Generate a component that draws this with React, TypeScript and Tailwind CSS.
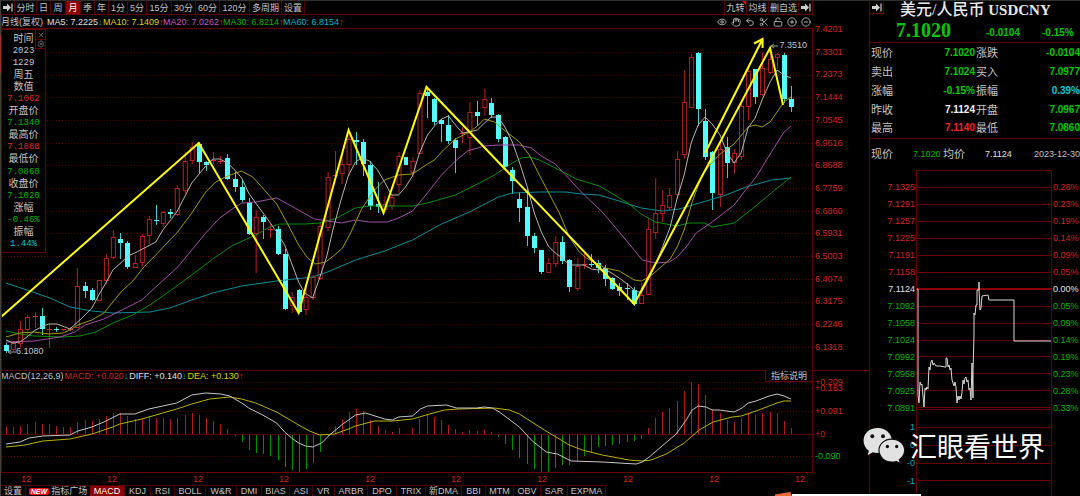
import React from "react";
import { Eye, Hand, Undo2, Scissors, LockOpen, CirclePlus, CircleMinus, X, Settings } from "lucide-react";

type Candle = [high: number, top: number, bottom: number, low: number, up: 0 | 1];

const candles: Candle[] = [
  [343, 345, 351, 352, 0], [341, 343, 349, 350, 1], [321, 329, 343, 346, 1], [315, 317, 329, 333, 1], [312, 316, 316, 327, 1],
  [308, 316, 329, 334, 0], [324, 329, 329, 347, 1], [327, 329, 329, 331, 0], [329, 329, 329, 330, 1], [327, 329, 329, 330, 1],
  [268, 286, 327, 327, 1], [282, 286, 291, 297, 0], [288, 290, 300, 300, 0], [280, 280, 300, 300, 1], [254, 258, 280, 283, 1],
  [230, 237, 257, 258, 1], [233, 239, 243, 258, 0], [241, 243, 267, 268, 0], [255, 263, 267, 267, 1], [234, 236, 262, 266, 1],
  [216, 219, 235, 243, 1], [205, 220, 221, 224, 0], [211, 212, 223, 226, 1], [209, 212, 214, 217, 0], [185, 188, 214, 215, 1],
  [152, 161, 190, 193, 1], [142, 147, 160, 163, 1], [142, 144, 162, 172, 0], [161, 162, 165, 170, 0], [152, 160, 160, 163, 1],
  [156, 161, 161, 163, 1], [154, 158, 179, 179, 0], [172, 179, 187, 191, 0], [180, 187, 200, 201, 0], [198, 202, 234, 234, 0],
  [210, 217, 233, 272, 1], [215, 217, 222, 238, 0], [224, 229, 229, 237, 1], [226, 229, 254, 254, 0], [249, 254, 309, 309, 0],
  [292, 297, 305, 312, 1], [289, 290, 312, 312, 0], [288, 297, 309, 314, 1], [275, 277, 297, 299, 1], [222, 226, 278, 279, 1],
  [172, 177, 227, 230, 1], [151, 175, 175, 177, 1], [154, 164, 173, 183, 1], [132, 139, 164, 175, 1], [132, 140, 142, 164, 0],
  [139, 142, 164, 175, 0], [161, 165, 206, 209, 0], [182, 204, 207, 212, 0], [196, 204, 209, 210, 1], [194, 197, 205, 209, 1],
  [152, 156, 184, 192, 1], [153, 157, 165, 172, 0], [157, 161, 172, 176, 1], [90, 93, 153, 153, 1], [87, 92, 96, 117, 0],
  [98, 99, 122, 124, 0], [119, 120, 124, 141, 0], [115, 125, 141, 143, 0], [138, 140, 148, 172, 0], [127, 133, 133, 142, 1],
  [102, 112, 137, 154, 1], [101, 112, 116, 125, 0], [89, 99, 107, 115, 1], [98, 103, 115, 117, 0], [114, 115, 139, 141, 0],
  [136, 137, 167, 168, 0], [167, 170, 181, 193, 0], [192, 199, 208, 221, 0], [189, 207, 236, 245, 0], [233, 236, 248, 252, 0],
  [250, 250, 272, 273, 0], [258, 263, 272, 272, 1], [236, 242, 263, 266, 1], [236, 242, 261, 263, 0], [259, 260, 287, 291, 0],
  [258, 266, 288, 290, 1], [253, 264, 264, 268, 1], [254, 264, 264, 266, 0], [260, 263, 268, 272, 0], [265, 268, 279, 285, 0],
  [277, 278, 289, 289, 0], [283, 287, 291, 295, 0], [283, 288, 289, 299, 0], [287, 290, 304, 305, 0], [283, 295, 303, 303, 1],
  [218, 229, 294, 294, 1], [178, 213, 232, 238, 1], [190, 205, 213, 221, 1], [188, 195, 207, 209, 1], [151, 159, 194, 198, 1],
  [70, 102, 154, 158, 1], [54, 57, 107, 107, 1], [52, 53, 109, 125, 0], [109, 121, 157, 159, 0], [151, 152, 193, 209, 0],
  [143, 149, 194, 206, 1], [137, 147, 163, 177, 0], [149, 153, 162, 173, 1], [104, 106, 156, 159, 1], [65, 71, 106, 119, 1],
  [69, 69, 97, 103, 0], [53, 68, 94, 95, 1], [46, 59, 72, 73, 1], [53, 54, 57, 68, 1], [53, 55, 99, 102, 0], [86, 99, 107, 111, 0],
];

const macdBars = [
  8, 7, 8, 10, 12, 10, 10, 8, 7, 7, 12, 14, 13, 15, 18, 21, 21, 18, 15, 16, 18, 16, 16, 15, 16, 19, 21, 19, 16, 13, 10, 5, -1, -7,
  -15, -18, -19, -21, -25, -32, -35, -37, -34, -28, -17, -1, 8, 15, 22, 25, 23, 14, 8, 4, 2, 6, 6, 6, 15, 19, 17, 14, 9, 5, 2, 4, 3,
  4, 2, -2, -9, -15, -23, -29, -34, -38, -37, -33, -30, -30, -26, -21, -17, -12, -11, -10, -9, -7, -6, -4, 6, 16, 22, 26, 33, 43, 52,
  50, 39, 24, 21, 14, 12, 16, 21, 19, 21, 22, 21, 13, 6,
];

const barX = (i: number) => Math.round(6 + i * 7.145);

const averages: { color: string; points: string }[] = [
  { color: "#0e8d99", points: "6,283 27,290 50,298 70,307 92,311 113,313 150,312 170,308 192,300 213,293 242,286 277,281 313,277 328,272 356,260 385,251 413,240 442,224 470,212 499,197 513,193 540,192 567,192 582,194 600,195 623,202 642,208 663,211 680,209 707,201 727,195 747,187 773,180 792,178" },
  { color: "#078f07", points: "6,331 20,334 34,336 63,337 80,336 96,332 113,323 133,315 150,305 170,291 192,275 213,259 232,246 256,235 270,227 280,224 306,224 320,223 335,219 356,208 370,206 413,206 428,203 456,195 480,183 495,175 513,163 522,158 530,157 540,160 562,171 577,179 600,186 617,196 630,204 642,214 656,222 678,226 690,223 705,223 713,227 735,223 753,209 777,189 792,177" },
  { color: "#a24fa8", points: "6,342 34,341 60,337 75,332 85,325 104,319 120,311 142,300 156,287 178,267 192,250 206,233 220,218 234,208 242,203 256,202 277,198 290,205 306,214 315,219 328,221 342,223 356,220 370,222 388,222 399,218 413,211 428,193 442,175 456,161 468,151 485,146 499,145 520,145 532,148 542,156 556,164 570,179 583,193 603,212 620,232 635,250 643,260 657,263 670,262 678,257 687,247 697,233 713,222 735,205 745,192 757,177 778,143 785,132 792,126" },
  { color: "#a09c0c", points: "6,337 20,333 34,332 49,334 63,333 70,330 78,325 92,320 104,313 113,302 122,291 133,281 144,267 156,255 170,240 177,233 192,213 206,192 216,182 228,176 242,171 253,177 263,188 277,204 288,224 299,245 308,258 316,264 326,262 335,255 343,248 351,233 362,209 375,190 385,180 399,175 413,174 428,164 435,160 444,150 456,139 470,132 478,126 485,119 495,122 506,131 520,142 530,155 540,175 560,213 570,237 580,252 587,258 606,268 620,271 635,280 642,281 650,277 656,272 671,259 678,247 685,230 693,202 703,175 710,166 721,154 735,144 749,127 756,125 763,127 771,122 778,112 785,102 792,97" },
  { color: "#b4b4b4", points: "6,340 13,343 20,342 27,337 34,331 43,326 49,324 57,324 65,327 70,329 80,320 85,315 92,308 100,293 106,283 113,270 122,262 128,256 135,253 156,242 163,230 177,212 192,183 206,166 213,159 220,159 228,163 235,170 242,178 249,193 256,203 270,222 277,232 285,245 299,282 305,293 313,298 320,278 327,257 334,227 342,198 349,175 356,162 362,158 370,161 378,170 385,182 392,195 399,195 406,187 413,176 420,153 428,135 435,126 442,119 449,116 456,125 463,133 470,132 478,130 485,123 492,117 499,117 506,128 513,142 520,162 528,187 535,213 542,232 549,246 556,253 563,258 570,265 585,265 592,269 599,270 606,269 620,278 628,284 635,290 642,293 649,280 656,265 663,248 671,227 678,198 685,175 692,143 699,125 706,117 713,124 721,135 728,153 735,163 742,153 749,128 756,118 763,100 771,82 778,70 785,75 792,78" },
];

const diffLine = "6,444 20,442 29,438 43,436 70,435 78,431 92,427 104,422 120,414 135,414 149,409 163,406 177,403 192,395 206,393 221,394 230,396 242,403 249,408 263,415 277,423 285,432 292,438 299,443 306,446 313,447 322,443 330,435 342,425 356,415 366,413 385,419 393,420 399,417 413,416 421,409 428,406 447,405 457,408 477,408 485,407 493,408 500,412 520,427 533,441 547,452 558,454 572,461 603,462 637,464 643,462 650,457 677,434 687,420 693,410 699,406 707,407 713,410 720,410 735,412 743,408 749,403 757,401 770,396 778,394 785,396 792,399";
const deaLine = "6,447 25,445 43,441 70,439 92,434 113,427 120,424 142,419 177,409 192,404 210,399 230,397 242,399 256,403 277,412 299,425 310,431 320,435 335,434 349,429 356,426 375,421 393,421 413,419 430,414 445,410 460,409 495,408 510,410 520,414 545,430 570,445 583,450 603,455 630,460 643,461 652,460 667,454 685,443 700,430 714,422 733,417 742,416 757,411 778,403 785,401 792,401";
const intraday = "917,289 918,289 918,396 919,403 920,382 921,385 922,384 923,396 924,407 925,388 926,390 927,387 928,389 929,367 930,370 931,362 932,360 933,365 934,363 936,366 940,366 945,367 946,367 946,358 947,358 948,367 949,365 950,370 951,368 952,380 954,386 955,382 956,387 957,403 958,396 959,400 960,396 961,399 962,392 963,380 964,384 965,378 966,377 967,382 968,380 969,390 970,388 971,400 972,363 973,398 973,372 974,335 974,313 975,315 976,305 977,305 977,290 979,290 979,282 979,290 980,310 981,308 982,296 988,295 989,300 1014,300 1014,341 1051,341";

const priceGrid = [52, 75, 97, 120, 143, 165, 188, 211, 233, 256, 279, 302, 324, 347];
const priceLabels = ["7.4201", "7.3301", "7.2373", "7.1444", "7.0545", "6.9616", "6.8688", "6.7759", "6.6860", "6.5931", "6.5003", "6.4074", "6.3175", "6.2246", "6.1318"];

const periods: [string, string][] = [
  ["分时", "w-[22px]"], ["日", "w-[14px]"], ["周", "w-[15px]"], ["月", "w-[15px]"], ["季", "w-[14px]"], ["年", "w-[14px]"],
  ["1分", "w-[19px]"], ["5分", "w-[19px]"], ["15分", "w-[25px]"], ["30分", "w-[24px]"], ["60分", "w-[24px]"], ["120分", "w-[30px]"],
  ["多周期", "w-[32px]"], ["设置", "w-[23px]"],
];

const maLegend: [string, string, string, string][] = [
  ["MA5: 7.2225", "↓", "text-[#e0e0e0]", "w-[56px]"],
  ["MA10: 7.1409", "↑", "text-[#d8d800]", "w-[60px]"],
  ["MA20: 7.0262", "↑", "text-[#c05cc8]", "w-[60px]"],
  ["MA30: 6.8214", "↑", "text-[#00b400]", "w-[60px]"],
  ["MA60: 6.8154", "↑", "text-[#00b4c4]", "w-[60px]"],
];

const infoRows: [string, string][] = [
  ["时间", ""], ["2023", "text-[#c8c8c8]"], ["1229", "text-[#c8c8c8]"], ["周五", ""], ["数值", ""], ["7.1062", "text-[#d83030]"],
  ["开盘价", ""], ["7.1340", "text-[#00b400]"], ["最高价", ""], ["7.1888", "text-[#d83030]"], ["最低价", ""], ["7.0860", "text-[#00b400]"],
  ["收盘价", ""], ["7.1020", "text-[#00b400]"], ["涨幅", ""], ["-0.46%", "text-[#00b400]"], ["振幅", ""], ["1.44%", "text-[#00c0d0]"],
];

const indicators: [string, string][] = [
  ["MACD", "w-[35px]"], ["KDJ", "w-[26px]"], ["RSI", "w-[24px]"], ["BOLL", "w-[31px]"], ["W&R", "w-[31px]"], ["DMI", "w-[25px]"],
  ["BIAS", "w-[28px]"], ["ASI", "w-[23px]"], ["VR", "w-[22px]"], ["ARBR", "w-[33px]"], ["DPO", "w-[29px]"], ["TRIX", "w-[29px]"],
  ["新DMA", "w-[36px]"], ["BBI", "w-[24px]"], ["MTM", "w-[28px]"], ["OBV", "w-[27px]"], ["SAR", "w-[27px]"], ["EXPMA", "w-[38px]"],
];

const G = "text-[#00c800]";
const quotes: [string, string, string, string, string, string][] = [
  ["现价", "7.1020", G, "涨跌", "-0.0104", G],
  ["卖出", "7.1024", G, "买入", "7.0977", G],
  ["涨幅", "-0.15%", G, "振幅", "0.39%", "text-[#00c8d8]"],
  ["昨收", "7.1124", "text-[#f0f0f0]", "开盘", "7.0967", G],
  ["最高", "7.1140", "text-[#f02828]", "最低", "7.0860", G],
];

const levels: [string, string][] = [
  ["7.1325", "0.28%"], ["7.1291", "0.23%"], ["7.1257", "0.19%"], ["7.1225", "0.14%"], ["7.1191", "0.09%"], ["7.1158", "0.05%"],
  ["7.1124", "0.00%"], ["7.1092", "0.05%"], ["7.1058", "0.09%"], ["7.1024", "0.14%"], ["7.0992", "0.19%"], ["7.0958", "0.23%"],
  ["7.0925", "0.28%"], ["7.0891", "0.33%"],
];
const levelColor = (i: number) => (i < 6 ? "text-[#d02424]" : i === 6 ? "text-[#e0e0e0]" : "text-[#00b400]");

function JumpIcon() {
  return (
    <svg viewBox="0 0 10 9" className="h-[9px] w-[10px]" aria-hidden="true">
      <path d="M0 3h4V0.5L8 4.5 4 8.5V6H0z" fill="#d0d0d0" />
      <path d="M9 0.5v8" stroke="#d0d0d0" strokeWidth="1.2" />
    </svg>
  );
}

function PriceChart() {
  return (
    <svg viewBox="0 29 813 341" preserveAspectRatio="none" className="block h-[341px] w-full" role="img" aria-label="USDCNY 月线">
      <g stroke="#5c0000" strokeDasharray="1 2" shapeRendering="crispEdges">
        {priceGrid.map((y) => <line key={y} x1="2" x2="813" y1={y + 0.5} y2={y + 0.5} />)}
      </g>
      <g shapeRendering="crispEdges">
        {candles.map(([high, top, bottom, low, up], i) => {
          const x = barX(i);
          if (!up || top === bottom) {
            const color = up ? "#d42a2a" : "#54fcfc";
            return (
              <g key={i} fill={color}>
                <rect x={x} y={high} width="1" height={low - high + 1} opacity="0.8" />
                <rect x={x - 2} y={top} width="5" height={Math.max(bottom - top, 1)} />
              </g>
            );
          }
          return (
            <g key={i} stroke="#b42222" fill="none">
              <path d={`M${x + 0.5} ${high}V${top}M${x + 0.5} ${bottom}V${low + 1}`} />
              <rect x={x - 1.5} y={top + 0.5} width="4" height={Math.max(bottom - top, 2)} />
            </g>
          );
        })}
      </g>
      {averages.map((a) => <polyline key={a.color} points={a.points} fill="none" stroke={a.color} strokeWidth="1" />)}
      <g fill="none" stroke="#ffff00" strokeWidth="2" strokeLinejoin="miter">
        <polyline points="1,317 199,143 299,313 349,130 384,213 427,87 635,304 771,48 784,105" />
        <path d="M706 153L763 40M755 43.5L763.500 39L763.500 48" />
      </g>
      <path d="M8 352H16M11 350L8 352L11 354M772 46H779M775 44L772 46L775 48" fill="none" stroke="#a0a0a0" />
    </svg>
  );
}

function MacdChart() {
  return (
    <svg viewBox="0 371 813 101" preserveAspectRatio="none" className="block h-[101px] w-full" role="img" aria-label="MACD">
      <g stroke="#5c0000" strokeDasharray="1 2" shapeRendering="crispEdges">
        {[382, 388, 411, 456].map((y) => <line key={y} x1="2" x2="813" y1={y + 0.5} y2={y + 0.5} />)}
      </g>
      <line x1="2" x2="813" y1="434.5" y2="434.5" stroke="#5c0000" shapeRendering="crispEdges" />
      <g shapeRendering="crispEdges">
        {macdBars.map((v, i) => (
          <rect key={i} x={barX(i)} y={v > 0 ? 434 - v : 435} width="1" height={Math.abs(v)} fill={v > 0 ? "#b01c1c" : "#008c00"} />
        ))}
      </g>
      <polyline points={deaLine} fill="none" stroke="#b8b400" />
      <polyline points={diffLine} fill="none" stroke="#c8c8c8" />
    </svg>
  );
}

function IntradayChart() {
  const lines = [187, 204, 221, 238, 255, 272, 306, 323, 340, 356, 373, 390, 407, 409, 427, 445, 463, 480];
  return (
    <svg viewBox="916 165 136 331" preserveAspectRatio="none" className="block h-[331px] w-full" role="img" aria-label="分时走势">
      <g stroke="#640000" fill="none" shapeRendering="crispEdges">
        <path d="M916.500 496V170.500H1051.500V496" />
        {lines.map((y) => <line key={y} x1="916" x2="1052" y1={y + 0.5} y2={y + 0.5} />)}
      </g>
      <rect x="917" y="288" width="134" height="2" fill="#8c0000" />
      <polyline points={intraday} fill="none" stroke="#d8d8d8" />
    </svg>
  );
}

function ChatLogo() {
  return (
    <svg viewBox="0 0 44 38" className="h-[37px] w-[44px] shrink-0" aria-hidden="true">
      <path d="M15.500 1C7 1 1 6.500 1 14c0 4.500 2.200 8 5.500 10.300L5.200 29l5.300-3c1.600.5 3.200.8 5 .8C24 26.800 30 21 30 14S24 1 15.500 1z" fill="#e2e2e2" />
      <path d="M30 12.500c-7.400 0-13.200 5-13.200 11.500S22.600 36 30 36c1.600 0 3-.2 4.500-.6L39 37.500l-1.200-4c3.200-2.200 5.400-5.400 5.400-9.500 0-6.500-5.800-11.500-13.200-11.500z" fill="#e2e2e2" stroke="#111" strokeWidth="1.200" />
      <g fill="#111">
        <circle cx="10" cy="9.500" r="2" /><circle cx="21" cy="9.500" r="2" />
        <circle cx="25.500" cy="20" r="1.700" /><circle cx="35" cy="20" r="1.700" />
      </g>
    </svg>
  );
}

const tools = [
  { Icon: Eye, name: "显示" }, { Icon: Hand, name: "拖动" }, { Icon: Undo2, name: "撤销" }, { Icon: Scissors, name: "剪切" },
  { Icon: LockOpen, name: "锁定" }, { Icon: CirclePlus, name: "放大" }, { Icon: CircleMinus, name: "缩小" },
];

export default function App() {
  return (
    <div className="relative flex min-h-screen w-full overflow-hidden bg-black font-['Liberation_Sans','Noto_Sans_CJK_SC',sans-serif] text-[9px] leading-[10px] text-[#c4c4c4]">
      <main className="flex min-w-0 flex-1 flex-col border-t border-[#303030]">
        <div className="flex flex-1 flex-col">
          <nav className="mr-[56px] flex h-[14px] items-stretch border-b border-[#640000] pl-[2px]">
            <button aria-label="展开" className="flex w-[13px] items-center justify-center border-r border-[#500000]"><JumpIcon /></button>
            {periods.map(([label, width]) => (
              <button key={label} className={`${width} whitespace-nowrap border-r border-[#500000] text-center ${label === "月" ? "bg-[#8c0000] text-white" : ""}`}>{label}</button>
            ))}
            <div className="ml-auto flex">
              <button className="relative w-[23px] whitespace-nowrap border-x border-[#500000]">
                九转
                <span className="absolute right-0 top-0 h-1 w-1 bg-[#f00000] [clip-path:polygon(0_0,100%_0,100%_100%)]" />
              </button>
              <button className="w-[22px] whitespace-nowrap border-r border-[#500000]">均线</button>
              <button className="w-[30px] whitespace-nowrap border-r border-[#500000]">删自选</button>
              <button aria-label="展开右栏" className="flex w-[14px] items-center justify-center border-r border-[#640000]"><JumpIcon /></button>
            </div>
          </nav>

          <div className="mr-[56px] flex h-[13px] items-center whitespace-nowrap pl-px">
            <span className="w-[46px]">月线(复权)</span>
            {maLegend.map(([text, arrow, color, width]) => (
              <span key={text} className={`${width} ${color}`}>{text}<span className={arrow === "↓" ? "text-[#00c0b0]" : "text-[#e02020]"}>{arrow}</span></span>
            ))}
            <div className="ml-auto flex gap-1 pr-[2px]">
              {tools.map(({ Icon, name }) => (
                <button key={name} aria-label={name} className="flex w-[10px] justify-center"><Icon className="h-[10px] w-[10px]" strokeWidth={2} /></button>
              ))}
            </div>
          </div>

          <div className="flex">
            <section className="relative min-w-0 flex-1 border-r border-t border-[#640000]">
              <PriceChart />
              <span className="absolute left-[16px] top-[317px]">6.1080</span>
              <span className="absolute right-[5px] top-[11px]">7.3510</span>
              <div className="absolute left-[1px] top-0 flex h-[224px] w-[45px] flex-col justify-between border border-[#640000] bg-black pb-[2px] pt-[3px] text-center">
                {infoRows.map(([text, color], i) => (
                  <span key={i} className={color ? `font-['Liberation_Mono',monospace] text-[9px] leading-[12px] ${color}` : "text-[10px] leading-[12px]"}>{text}</span>
                ))}
                <div className="absolute -right-px -top-px flex flex-col border border-[#640000]">
                  <button aria-label="关闭" className="flex h-[9px] w-[9px] items-center justify-center"><X className="h-[8px] w-[8px] text-[#808080]" /></button>
                  <button aria-label="设置" className="flex h-[9px] w-[9px] items-center justify-center border-t border-[#640000]"><Settings className="h-[8px] w-[8px] text-[#808080]" /></button>
                </div>
              </div>
            </section>
            <div className="-mt-1 flex h-[328px] w-[56px] flex-col justify-between pl-[2px] text-[#d02424]">
              {priceLabels.map((p) => <span key={p}>{p}</span>)}
            </div>
          </div>

          <div className="flex border-t border-[#640000]">
            <section className="relative min-w-0 flex-1 border-b border-r border-[#640000]">
              <MacdChart />
              <div className="absolute left-px top-0 flex gap-px whitespace-nowrap">
                <span>MACD(12,26,9)</span>
                <span className="text-[#d02828]">MACD: +0.020<span className="text-[#00c0b0]">↓</span></span>
                <span className="text-[#e0e0e0]">DIFF: +0.140<span className="text-[#00c0b0]">↓</span></span>
                <span className="text-[#d8d800]">DEA: +0.130<span className="text-[#e02020]">↑</span></span>
              </div>
              <button className="absolute -top-px right-0 h-[12px] w-[47px] border-b border-l border-[#640000] bg-black">指标说明</button>
            </section>
            <div className="flex w-[56px] flex-col pl-[2px] pt-[8px] text-[#d02424]">
              <span className="leading-[6px]">+0.209</span>
              <span className="leading-[6px]">+0.183</span>
              <span className="pt-[15px]">+0.091</span>
              <span className="pt-[13px]">+0</span>
              <span className="pt-[12px] text-[#00b400]">-0.090</span>
            </div>
          </div>

          <div className="-ml-[17px] flex h-[12px] items-center text-[#d02424]">
            {Array.from({ length: 10 }, (_, i) => <span key={i} className="w-[86px] shrink-0 text-center">12</span>)}
          </div>

          <nav className="flex h-[11px] items-stretch whitespace-nowrap pl-px">
            <button className="w-[25px] border-r border-t border-[#500000]">设置</button>
            <button className="flex w-[64px] items-center justify-center gap-[2px] border-t border-[#500000]">
              <span className="rounded-[2px] bg-[#f01010] px-[2px] text-[7px] font-bold italic leading-[7px] text-white">NEW</span>
              <span>指标广场</span>
            </button>
            {indicators.map(([name, width]) => (
              <button key={name} className={`${width} border-r border-t border-[#500000] ${name === "MACD" ? "bg-[#8c0000] text-white" : ""}`}>{name}</button>
            ))}
          </nav>
        </div>
      </main>

      <aside className="w-[211px] shrink-0 overflow-hidden border-l border-t border-l-[#640000] border-t-[#303030]">
        <header className="border-b border-[#640000]">
          <div className="flex h-[18px]">
            <button aria-label="收起" className="flex h-[13px] w-[14px] items-center justify-center border-b border-r border-[#640000]"><JumpIcon /></button>
            <h1 className="whitespace-nowrap pl-[16px] font-['Liberation_Serif','Noto_Sans_CJK_SC',serif] text-[15px] font-bold leading-[17px] text-[#e8e8e8]"><span className="text-[16px] font-medium">美元/人民币</span> USDCNY</h1>
          </div>
          <div className="flex h-[23px] items-center pl-[26px] text-[10px] font-bold text-[#00c800]">
            <strong className="w-[90px] font-['Liberation_Serif',serif] text-[20px] leading-[23px]">7.1020</strong>
            <span className="w-[56px] pt-[4px]">-0.0104</span>
            <span className="pt-[4px]">-0.15%</span>
          </div>
        </header>

        <table className="w-full table-fixed border-b border-[#640000] text-[11px]">
          <tbody>
            {quotes.map(([a, av, ac, b, bv, bc]) => (
              <tr key={a} className="h-[19px]">
                <th scope="row" className="w-[24px] whitespace-nowrap p-0 pl-px text-left font-normal">{a}</th>
                <td className={`w-[82px] p-0 pr-px text-right text-[10px] font-bold ${ac}`}>{av}</td>
                <th scope="row" className="w-[24px] whitespace-nowrap p-0 text-left font-normal">{b}</th>
                <td className={`p-0 text-right text-[10px] font-bold ${bc}`}>{bv}</td>
              </tr>
            ))}
          </tbody>
        </table>

        <div className="flex h-[26px] items-center whitespace-nowrap pl-px pt-[4px] text-[9px]">
          <span className="w-[42px] text-[11px]">现价</span>
          <span className="w-[30px] text-[#00b400]">7.1020</span>
          <span className="w-[42px] text-[11px]">均价</span>
          <span className="w-[49px] text-[#e0e0e0]">7.1124</span>
          <span>2023-12-30</span>
        </div>

        <div className="flex">
          <div className="w-[46px] shrink-0 pr-px pt-[17px] text-right">
            <div className="flex h-[231px] flex-col justify-between">
              {levels.map(([price], i) => <span key={price} className={levelColor(i)}>{price}</span>)}
            </div>
            <div className="mt-[9px] flex h-[64px] flex-col justify-between text-[#00a8b8]">
              <span>1</span><span>0</span><span>-0</span><span>-1</span>
            </div>
          </div>
          <div className="min-w-0 flex-1"><IntradayChart /></div>
          <div className="flex h-[248px] w-[28px] shrink-0 flex-col justify-between pl-px pt-[17px]">
            {levels.map(([price, pct], i) => <span key={price} className={levelColor(i)}>{pct}</span>)}
          </div>
        </div>
      </aside>

      <div className="absolute bottom-[27px] right-[35px] flex items-start gap-[4px] whitespace-nowrap text-[27px] leading-[42px] text-white">
        <ChatLogo />
        <span>汇眼看世界</span>
      </div>
      <div className="absolute bottom-0 right-[159px] flex items-end">
        <span className="h-[4px] w-[17px] bg-[#f06a38] [clip-path:polygon(0_60%,90%_0,100%_100%,0_100%)]" />
        <span className="h-[2px] w-[129px] bg-white" />
      </div>
      <div className="absolute inset-y-0 left-0 flex w-px flex-col bg-[#404040] pt-[35px]">
        <span className="h-[38px] bg-[#a03030]" />
      </div>
      <div className="absolute bottom-[24px] left-px top-[14px] w-px bg-[#640000]" />
    </div>
  );
}
